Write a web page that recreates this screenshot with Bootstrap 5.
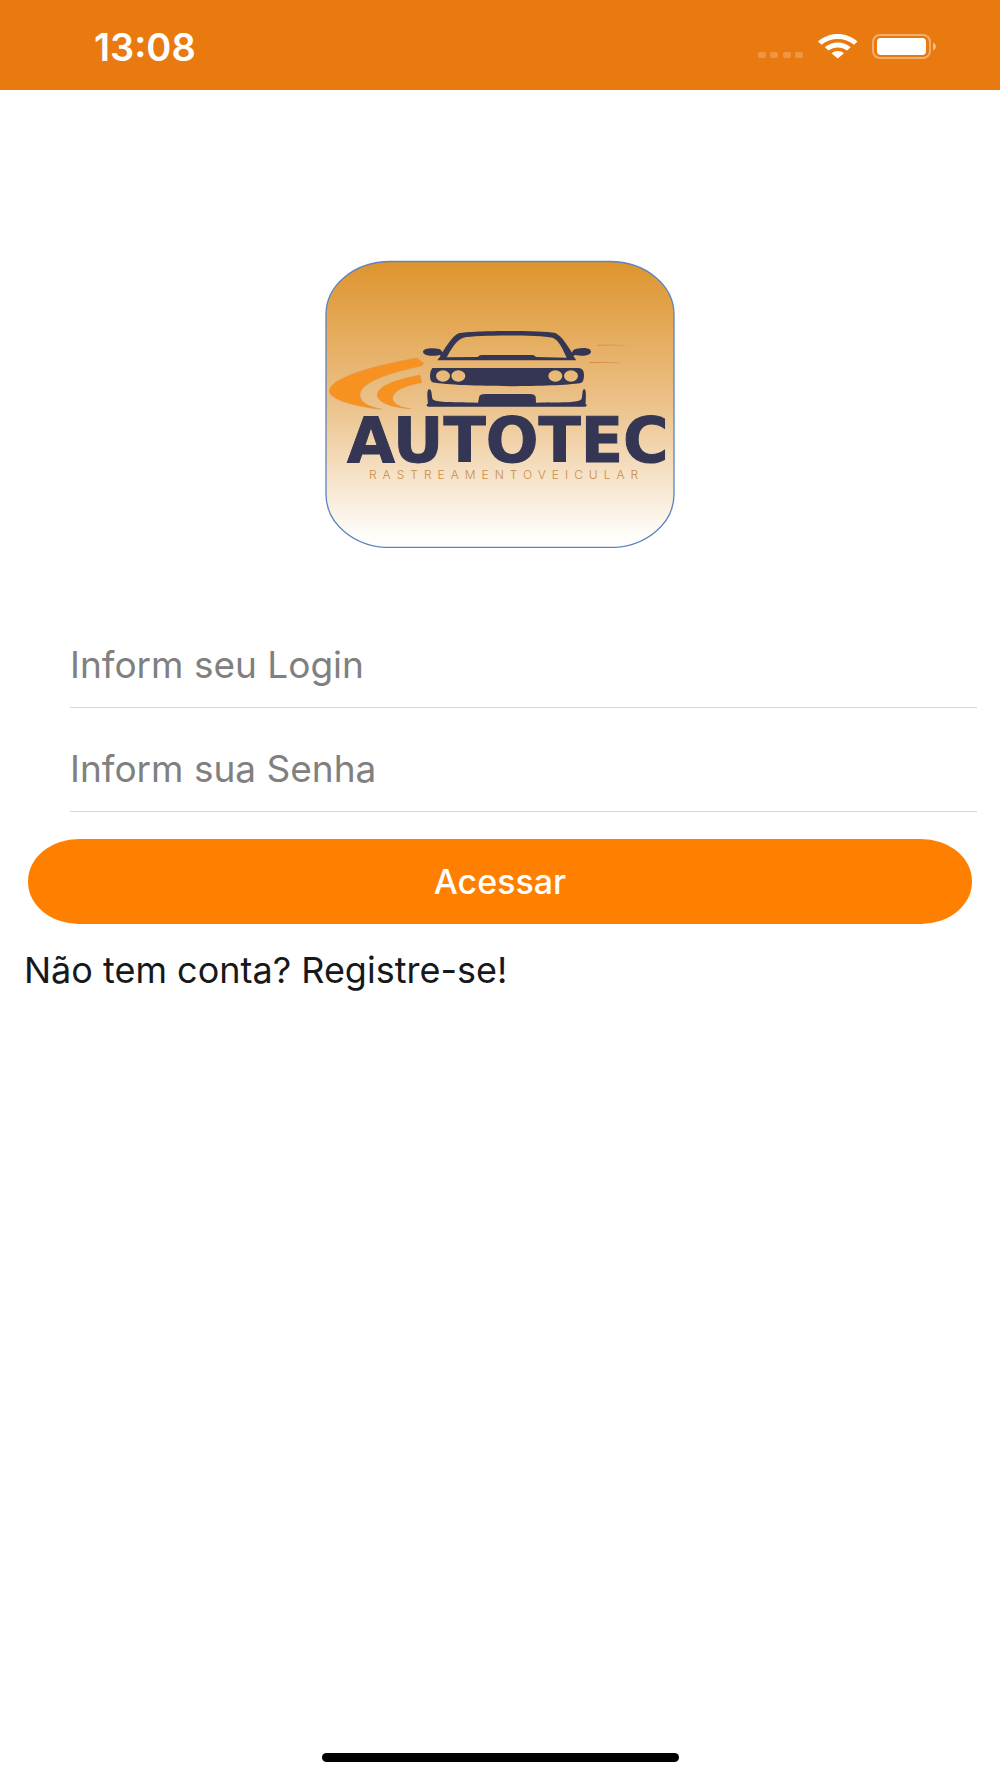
<!DOCTYPE html>
<html lang="pt-BR">
<head>
<meta charset="utf-8">
<meta name="viewport" content="width=device-width, initial-scale=1">
<title>Autotec</title>
<link href="https://cdn.jsdelivr.net/npm/bootstrap@5.3.0/dist/css/bootstrap.min.css" rel="stylesheet">
<style>
  body { font-family: Inter, "Liberation Sans", sans-serif; background: #fff; }
  .status-bar { background: #e87a10; height: 90px; padding: 4px 63px 0 94px; }
  .clock { font-size: 38px; line-height: 40px; font-weight: 600; }
  .brand { margin-top: 170px; }
  .brand-name { font: 700 62px "DejaVu Sans", sans-serif; fill: #343653; stroke: #343653; stroke-width: 1px; }
  .brand-tag { font: 300 12px Inter, sans-serif; letter-spacing: 6px; fill: #c98d49; }
  .login-form { margin-top: 56px; }
  .fields { padding-left: 70px; padding-right: 23px; }
  .field-line, .field-line:focus { height: 104px; padding: 18px 0 0; background: none; box-shadow: none; font-size: 37px; line-height: 44px; color: #17181b; }
  .field-line.border-bottom { border-color: #d6d6d6 !important; }
  .field-line::placeholder { color: #808080; opacity: 1; }
  .actions { padding: 27px 28px 0; }
  .btn-access, .btn-access:hover { height: 85px; background: #ff8000; border: 0; color: #fff; font-size: 34px; line-height: 44px; font-weight: 500; border-radius: 51px / 42px; }
  .register { margin: 24px 24px 0; font-size: 36px; line-height: 44px; color: #17181b; }
  .home-bar { width: 36%; max-width: 357px; height: 9px; margin-bottom: 16px; }
</style>
<script src="https://cdn.jsdelivr.net/npm/bootstrap@5.3.0/dist/js/bootstrap.bundle.min.js"></script>
</head>
<body>
<div class="d-flex flex-column min-vh-100">
  <header class="status-bar d-flex align-items-center justify-content-between text-white">
    <span class="clock">13:08</span>
    <svg width="180" height="28" viewBox="757 33 180 28" aria-hidden="true">
      <g fill="#fff" fill-opacity=".22"><rect x="758" y="52" width="8" height="6" rx="2"/><rect x="770" y="52" width="8" height="6" rx="2"/><rect x="783" y="52" width="8" height="6" rx="2"/><rect x="795" y="52" width="8" height="6" rx="2"/></g>
      <g fill="#fff">
        <path d="M818 41.500C829 31.500 846.500 31.500 857.500 41.500L854 44.700C845 37 830.500 37 821.500 44.700Z"/>
        <path d="M824.800 47.300C832 41 843.500 41 850.700 47.300L847 50.600C841.500 46.300 834 46.300 828.500 50.600Z"/>
        <path d="M831.500 53.300C835 50.200 840.500 50.200 844 53.300L837.700 58.600Z"/>
        <rect x="877" y="38" width="49" height="17" rx="4"/>
      </g>
      <rect x="873" y="35" width="57" height="23" rx="7" fill="none" stroke="#fff" stroke-opacity=".4" stroke-width="2"/>
      <path d="M933 42.500Q936 44 936 46.500Q936 49 933 50.500Z" fill="#fff" fill-opacity=".5"/>
    </svg>
  </header>

  <main>
    <div class="brand text-center">
      <svg width="350" height="288" viewBox="325 260 350 288" role="img" aria-label="Autotec Rastreamento Veicular">
        <defs>
          <linearGradient id="amber" x1="0" y1="0" x2="0" y2="1"><stop offset="0" stop-color="#de942d"/><stop offset=".5" stop-color="#ebc28a"/><stop offset=".97" stop-color="#fffefc"/></linearGradient>
          <linearGradient id="trail" x1="0" y1="0" x2="1" y2="0"><stop offset="0" stop-color="#df8431"/><stop offset="1" stop-color="#c8a884"/></linearGradient>
        </defs>
        <rect x="326" y="261.500" width="348" height="286" rx="64" ry="53" fill="url(#amber)" stroke="#5b84c0" stroke-width="1.300"/>
        <g transform="translate(320 255) scale(.33333)" fill="#f79120" stroke="#d99a55" stroke-width="1.500">
          <path d="M290 309L312 325L305 333C220 350 120 380 120 420C120 444 150 455 185 463C90 453 28 430 28 408C28 375 130 337 290 309Z"/>
          <path d="M300 360L305 383C250 392 218 410 218 430C218 448 245 458 272 461C210 458 172 440 172 420C172 395 220 375 300 360Z"/>
        </g>
        <g transform="translate(410 320) scale(.33333)">
          <path fill="#343653" fill-rule="evenodd" d="M82 121L92 107L88 105C70 110 40 108 39 95C40 84 68 82 88 87Q95 89 97 97C112 75 128 48 146 40C190 31 390 31 436 39C455 48 472 76 486 98Q488 88 500 86C520 83 542 83 543 95C542 108 515 109 495 105L490 108L499 121ZM110 112L203 111Q208 105 215 105H368Q375 106 378 111L470 113C458 86 446 60 428 53C385 45 205 44 160 53C138 61 123 88 110 112Z"/>
          <path fill="#343653" fill-rule="evenodd" d="M67 144H505Q522 144 522 165Q522 187 512 189C430 202 150 202 67 187Q60 182 60 166Q60 152 67 144ZM99 151A21 17 0 1 0 99 185A21 17 0 1 0 99 151ZM145 151A21 17 0 1 0 145 185A21 17 0 1 0 145 151ZM436 151A21 17 0 1 0 436 185A21 17 0 1 0 436 151ZM483 151A21 17 0 1 0 483 185A21 17 0 1 0 483 151Z"/>
          <path fill="#343653" d="M56 208C67 206 64 228 68 238C80 248 110 246 204 248L208 228Q212 222 225 222H360Q375 223 377 230L378 248C470 247 500 249 514 238C519 228 515 208 523 207C530 209 527 235 527 252L531 256L526 260H54L49 256L54 250C52 236 50 212 56 208Z"/>
          <path d="M561 76Q600 73 647 78M539 128Q580 125 630 129" fill="none" stroke="url(#trail)" stroke-width="3"/>
        </g>
        <text class="brand-name" x="347" y="462">AUTOTEC</text>
        <text class="brand-tag" x="369" y="479">RASTREAMENTOVEICULAR</text>
      </svg>
    </div>

    <form class="login-form">
      <div class="fields">
        <input class="form-control field-line border-0 border-bottom rounded-0" type="text" placeholder="Inform seu Login" aria-label="Inform seu Login">
        <input class="form-control field-line border-0 border-bottom rounded-0" type="password" placeholder="Inform sua Senha" aria-label="Inform sua Senha">
      </div>
      <div class="actions"><button class="btn btn-access w-100" type="submit">Acessar</button></div>
    </form>
    <a href="#" class="register d-inline-block text-decoration-none">Não tem conta? Registre-se!</a>
  </main>

  <div class="home-bar bg-black rounded-pill mt-auto mx-auto"></div>
</div>
</body>
</html>
